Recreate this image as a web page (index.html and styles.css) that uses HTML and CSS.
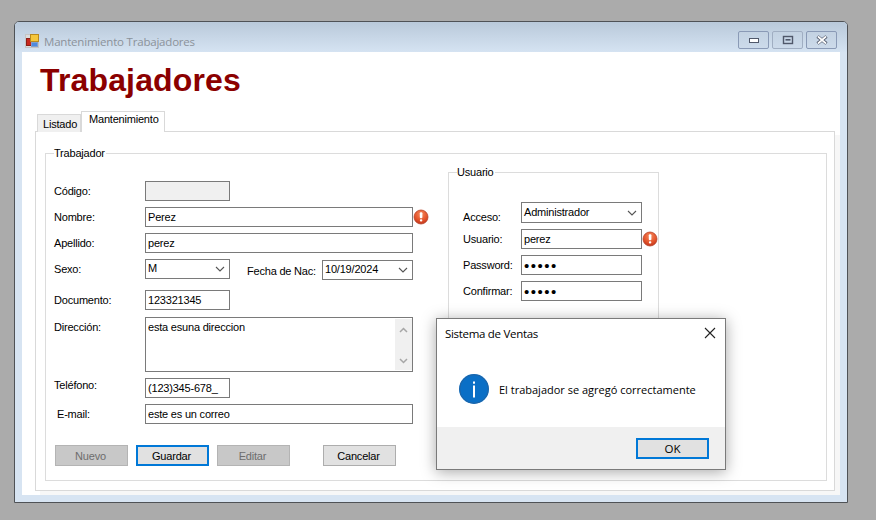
FILE: index.html
```html
<!DOCTYPE html>
<html lang="es">
<head>
<meta charset="utf-8">
<title>Mantenimiento Trabajadores</title>
<link rel="stylesheet" href="styles.css">
</head>
<body>
<div class="window">
  <header class="titlebar">
    <svg class="app-icon" width="14" height="14" viewBox="0 0 14 14">
      <rect x="0.5" y="0.5" width="13" height="13" fill="#dcdcdc" stroke="#c4c4c4"/>
      <rect x="1.5" y="4.5" width="5" height="7" fill="#c8281e" stroke="#8d1f18"/>
      <rect x="5.5" y="0.5" width="8" height="7" fill="#f5c73c" stroke="#b98a1e"/>
      <rect x="6.5" y="8.5" width="6" height="4" fill="#4f8ade" stroke="#7f9fd0"/>
    </svg>
    <span class="title-text">Mantenimiento Trabajadores</span>
    <div class="caption-buttons">
      <div class="caption-btn">
        <svg width="12" height="7" viewBox="0 0 12 7"><rect x="1.5" y="1.5" width="9" height="4" fill="#fff" stroke="#50586a"/></svg>
      </div>
      <div class="caption-btn caption-btn-light">
        <svg width="12" height="10" viewBox="0 0 12 10"><rect x="1.5" y="1.5" width="9" height="7" fill="none" stroke="#50586a" stroke-width="1.4"/><rect x="3.5" y="4" width="5" height="1.6" fill="#50586a"/></svg>
      </div>
      <div class="caption-btn">
        <svg width="12" height="10" viewBox="0 0 12 10"><path d="M1.5 1.5 L10.5 8.5 M10.5 1.5 L1.5 8.5" stroke="#50586a" stroke-width="3.4"/><path d="M2 1.5 L10 8.5 M10 1.5 L2 8.5" stroke="#fff" stroke-width="1.7"/></svg>
      </div>
    </div>
  </header>
  <main class="content">
    <h1 class="heading">Trabajadores</h1>
    <div class="tabs">
      <div class="tab">Listado</div>
      <div class="tab tab-active">Mantenimiento</div>
    </div>
    <section class="tab-panel">
      <fieldset class="group group-main">
        <legend class="legend">Trabajador</legend>
        <div class="group-layout">
          <div class="form-col">
            <div class="row"><label class="label">Código:</label><input class="field field-short field-disabled" type="text" disabled></div>
            <div class="row row-gap6"><label class="label">Nombre:</label><input class="field field-wide" type="text" value="Perez">
              <svg class="error-icon" width="16" height="16" viewBox="0 0 16 16"><use href="#err"/></svg></div>
            <div class="row row-gap6"><label class="label">Apellido:</label><input class="field field-wide" type="text" value="perez"></div>
            <div class="row row-gap6"><label class="label">Sexo:</label>
              <div class="combo combo-short"><span>M</span><svg width="10" height="6" viewBox="0 0 10 6"><use href="#chev"/></svg></div>
              <label class="label-date">Fecha de Nac:</label>
              <div class="combo combo-date"><span>10/19/2024</span><svg width="10" height="6" viewBox="0 0 10 6"><use href="#chev"/></svg></div>
            </div>
            <div class="row row-gap11"><label class="label">Documento:</label><input class="field field-short" type="text" value="123321345"></div>
            <div class="row row-gap7 row-tall"><label class="label label-top">Dirección:</label>
              <div class="memo"><span class="memo-text">esta esuna direccion</span>
                <div class="scrollbar">
                  <svg width="9" height="6" viewBox="0 0 9 6"><path d="M1 5 L4.5 1.5 L8 5" fill="none" stroke="#a6a6a6" stroke-width="1.5"/></svg>
                  <svg width="9" height="6" viewBox="0 0 9 6"><path d="M1 1 L4.5 4.5 L8 1" fill="none" stroke="#a6a6a6" stroke-width="1.5"/></svg>
                </div>
              </div>
            </div>
            <div class="row row-gap6"><label class="label label-raised">Teléfono:</label><input class="field field-short" type="text" value="(123)345-678_"></div>
            <div class="row row-gap6"><label class="label label-indent">E-mail:</label><input class="field field-wide" type="text" value="este es un correo"></div>
            <div class="actions">
              <button class="btn btn-disabled" type="button">Nuevo</button>
              <button class="btn btn-focus" type="button">Guardar</button>
              <button class="btn btn-disabled" type="button">Editar</button>
              <button class="btn btn-far" type="button">Cancelar</button>
            </div>
          </div>
          <fieldset class="group group-user">
            <legend class="legend legend-user">Usuario</legend>
            <div class="row row-combo"><label class="label label-user label-low">Acceso:</label>
              <div class="combo combo-user"><span>Administrador</span><svg width="10" height="6" viewBox="0 0 10 6"><use href="#chev"/></svg></div></div>
            <div class="row row-gap6"><label class="label label-user">Usuario:</label><input class="field field-user" type="text" value="perez">
              <svg class="error-icon" width="16" height="16" viewBox="0 0 16 16"><use href="#err"/></svg></div>
            <div class="row row-gap6"><label class="label label-user">Password:</label><input class="field field-user field-pass" type="password" value="perez"></div>
            <div class="row row-gap6"><label class="label label-user">Confirmar:</label><input class="field field-user field-pass" type="password" value="perez"></div>
          </fieldset>
        </div>
      </fieldset>
    </section>
  </main>
</div>

<div class="dialog">
  <div class="dialog-title"><span>Sistema de Ventas</span>
    <svg width="12" height="12" viewBox="0 0 12 12"><path d="M1 1 L11 11 M11 1 L1 11" stroke="#222" stroke-width="1.1"/></svg>
  </div>
  <div class="dialog-body">
    <svg width="30" height="30" viewBox="0 0 30 30">
      <circle cx="15" cy="15" r="15" fill="#0a6fc6"/>
      <circle cx="15" cy="15" r="14.3" fill="none" stroke="#2d5f94" stroke-width="0.7"/>
      <rect x="14" y="7.5" width="2" height="2.2" fill="#fff"/>
      <rect x="14" y="11.5" width="2" height="12" fill="#fff"/>
    </svg>
    <span class="dialog-msg">El trabajador se agregó correctamente</span>
  </div>
  <div class="dialog-footer">
    <button class="btn btn-focus btn-ok" type="button">OK</button>
  </div>
</div>

<svg class="defs" width="0" height="0">
  <defs>
    <symbol id="chev" viewBox="0 0 10 6"><path d="M1 1 L5 5 L9 1" fill="none" stroke="#555" stroke-width="1.1"/></symbol>
    <radialGradient id="errfill" cx="50%" cy="30%" r="75%"><stop offset="0" stop-color="#f58a5e"/><stop offset="0.6" stop-color="#e4532a"/><stop offset="1" stop-color="#b9301a"/></radialGradient>
    <symbol id="err" viewBox="0 0 16 16">
      <circle cx="8" cy="8" r="7" fill="url(#errfill)" stroke="#b8432a" stroke-width="0.8"/>
      <rect x="6.8" y="3.2" width="2.6" height="6" rx="1" fill="#fff"/>
      <rect x="6.9" y="10.2" width="2.4" height="2.4" rx="1" fill="#fff"/>
    </symbol>
  </defs>
</svg>
</body>
</html>
```
FILE: styles.css
```css
* { box-sizing: border-box; }
html, body { margin: 0; height: 100%; }
body {
  background: #ababab;
  font-family: "Liberation Sans", Arial, sans-serif;
  font-size: 11px;
  letter-spacing: -0.2px;
  color: #000;
  overflow: hidden;
  position: relative;
}
.defs { position: absolute; }

/* Window on the desktop */
.window {
  position: absolute;
  left: 14px;
  top: 21px;
  width: 834px;
  height: 482px;
  display: flex;
  flex-direction: column;
  border: 1px solid #4f5256;
  border-radius: 5px 5px 0 0;
  background: #d7e4f2;
  padding: 0 7px 7px;
}
.titlebar {
  height: 30px;
  margin: 0 -7px;
  padding: 8px 10px 0 10px;
  display: flex;
  align-items: center;
  background: linear-gradient(#b9c9da, #d5e3f2);
  border-radius: 4px 4px 0 0;
}
.app-icon { flex: none; }
.title-text {
  margin-left: 5px;
  font-family: "Open Sans", sans-serif;
  font-size: 11.5px;
  letter-spacing: -0.2px;
  color: #8b929a;
}
.caption-buttons {
  margin-left: auto;
  display: flex;
  gap: 3px;
  align-self: flex-start;
  padding-top: 1px;
}
.caption-btn {
  width: 31px;
  height: 18px;
  border: 1px solid #8a9ab6;
  border-radius: 2px;
  background: linear-gradient(#c3d2e2, #ccdaea);
  display: flex;
  align-items: center;
  justify-content: center;
}
.caption-btn-light { border-color: #a0aec2; }

/* Client area */
.content {
  flex: 1;
  min-height: 0;
  display: flex;
  flex-direction: column;
  background: #fff;
  padding: 0 5px 4px 13px;
}
.heading {
  margin: 10px 0 0 5px;
  height: 49px;
  font-size: 32px;
  line-height: 37px;
  font-weight: bold;
  letter-spacing: 0.15px;
  color: #8b0000;
}
.tabs {
  display: flex;
  align-items: flex-end;
  padding-left: 2px;
  height: 20px;
  position: relative;
}
.tab {
  height: 18px;
  width: 44px;
  margin-bottom: -1px;
  background: #f0f0f0;
  border: 1px solid #d9d9d9;
  border-bottom: 0;
  padding: 2px 0 0 5px;
  line-height: 14px;
}
.tab-active {
  position: relative;
  z-index: 1;
  width: 84px;
  height: 21px;
  background: #fff;
  padding: 0 0 0 7px;
  border-bottom: 0;
}
.tab-panel {
  flex: 1;
  min-height: 0;
  display: flex;
  flex-direction: column;
  border: 1px solid #d9d9d9;
  box-shadow: 5px 4px 0 #f7f7f7;
  padding: 15px 7px 9px 9px;
}

/* Group boxes */
.group {
  margin: 0;
  min-width: 0;
  border: 1px solid #dcdcdc;
}
.group-main {
  flex: 1;
  padding: 0 0 0 8px;
}
.legend {
  margin-left: 0;
  padding: 0 1px 0 0;
  line-height: 13px;
  height: 13px;
}
.legend-user { margin-left: -6px; }
.group-layout { display: flex; align-items: flex-start; }
.form-col {
  width: 375px;
  padding-top: 21px;
  flex: none;
}
.group-user {
  margin: 6px 0 0 19px;
  width: 211px;
  padding: 0 0 130px 14px;
}

/* Rows */
.row { display: flex; align-items: center; height: 20px; }
.row-gap6 { margin-top: 6px; }
.row-gap7 { margin-top: 7px; }
.row-gap11 { margin-top: 11px; }
.row-tall { height: 55px; align-items: flex-start; }
.row-combo { margin-top: 23px; height: 21px; }
.label { width: 91px; flex: none; }
.label-user { width: 58px; }
.label-top { padding-top: 4px; }
.label-raised { position: relative; top: -3px; }
.label-indent { padding-left: 3px; }
.label-low { position: relative; top: 4px; }
.label-date { margin-left: 17px; width: 75px; flex: none; position: relative; top: 2px; }

/* Controls */
.field {
  height: 20px;
  border: 1px solid #7a7a7a;
  background: #fff;
  padding: 0 2px;
  font: inherit;
  letter-spacing: inherit;
  color: #000;
  outline: 0;
  flex: none;
}
.field-short { width: 85px; }
.field-wide { width: 268px; }
.field-user { width: 121px; }
.field-disabled { background: #f0f0f0; }
.field-pass { font-size: 15px; letter-spacing: 1.5px; }
.error-icon { flex: none; margin-left: 0; }
.combo {
  height: 20px;
  border: 1px solid #7a7a7a;
  background: #fff;
  display: flex;
  align-items: center;
  justify-content: space-between;
  padding: 0 4px 2px 2px;
  flex: none;
}
.combo svg { margin-top: 2px; }
.combo-short { width: 85px; }
.combo-date { width: 91px; margin-top: 2px; }
.combo-user { width: 121px; height: 21px; padding-left: 2px; }
.memo {
  width: 268px;
  height: 55px;
  border: 1px solid #7a7a7a;
  display: flex;
  justify-content: space-between;
  flex: none;
}
.memo-text { padding: 3px 0 0 2px; }
.scrollbar {
  width: 17px;
  margin: 1px 0;
  background: #f0f0f0;
  display: flex;
  flex-direction: column;
  justify-content: space-between;
  align-items: center;
  padding: 8px 0 6px;
}

/* Buttons */
.actions { display: flex; gap: 8px; margin-top: 21px; margin-left: 1px; }
.btn {
  width: 73px;
  height: 21px;
  padding: 0 2px 0 0;
  border: 1px solid #adadad;
  background: #e1e1e1;
  font: inherit;
  letter-spacing: inherit;
  color: #000;
}
.btn-disabled { background: #c8c8c8; border-color: #b4b4b4; color: #6d6d6d; }
.btn-focus { border: 2px solid #0078d7; }
.btn-far { margin-left: 25px; }

/* Message box */
.dialog {
  position: absolute;
  left: 436px;
  top: 318px;
  width: 290px;
  height: 152px;
  display: flex;
  flex-direction: column;
  background: #fff;
  border: 1px solid #7a7a7a;
  box-shadow: 0 2px 14px rgba(0, 0, 0, 0.35);
  font-family: "Open Sans", sans-serif;
  letter-spacing: 0;
}
.dialog-title {
  height: 30px;
  padding: 0 9px 2px 8px;
  display: flex;
  align-items: center;
  justify-content: space-between;
  font-size: 11.5px;
  letter-spacing: -0.3px;
}
.dialog-body {
  flex: 1;
  display: flex;
  align-items: center;
  padding: 2px 0 0 22px;
  gap: 10px;
}
.dialog-msg { font-size: 11px; letter-spacing: 0; }
.dialog-footer {
  height: 42px;
  background: #f0f0f0;
  display: flex;
  justify-content: flex-end;
  align-items: flex-start;
  padding: 11px 16px 0 0;
}
.btn-ok { font-family: "Open Sans", sans-serif; font-size: 11.5px; padding: 0; }
```
